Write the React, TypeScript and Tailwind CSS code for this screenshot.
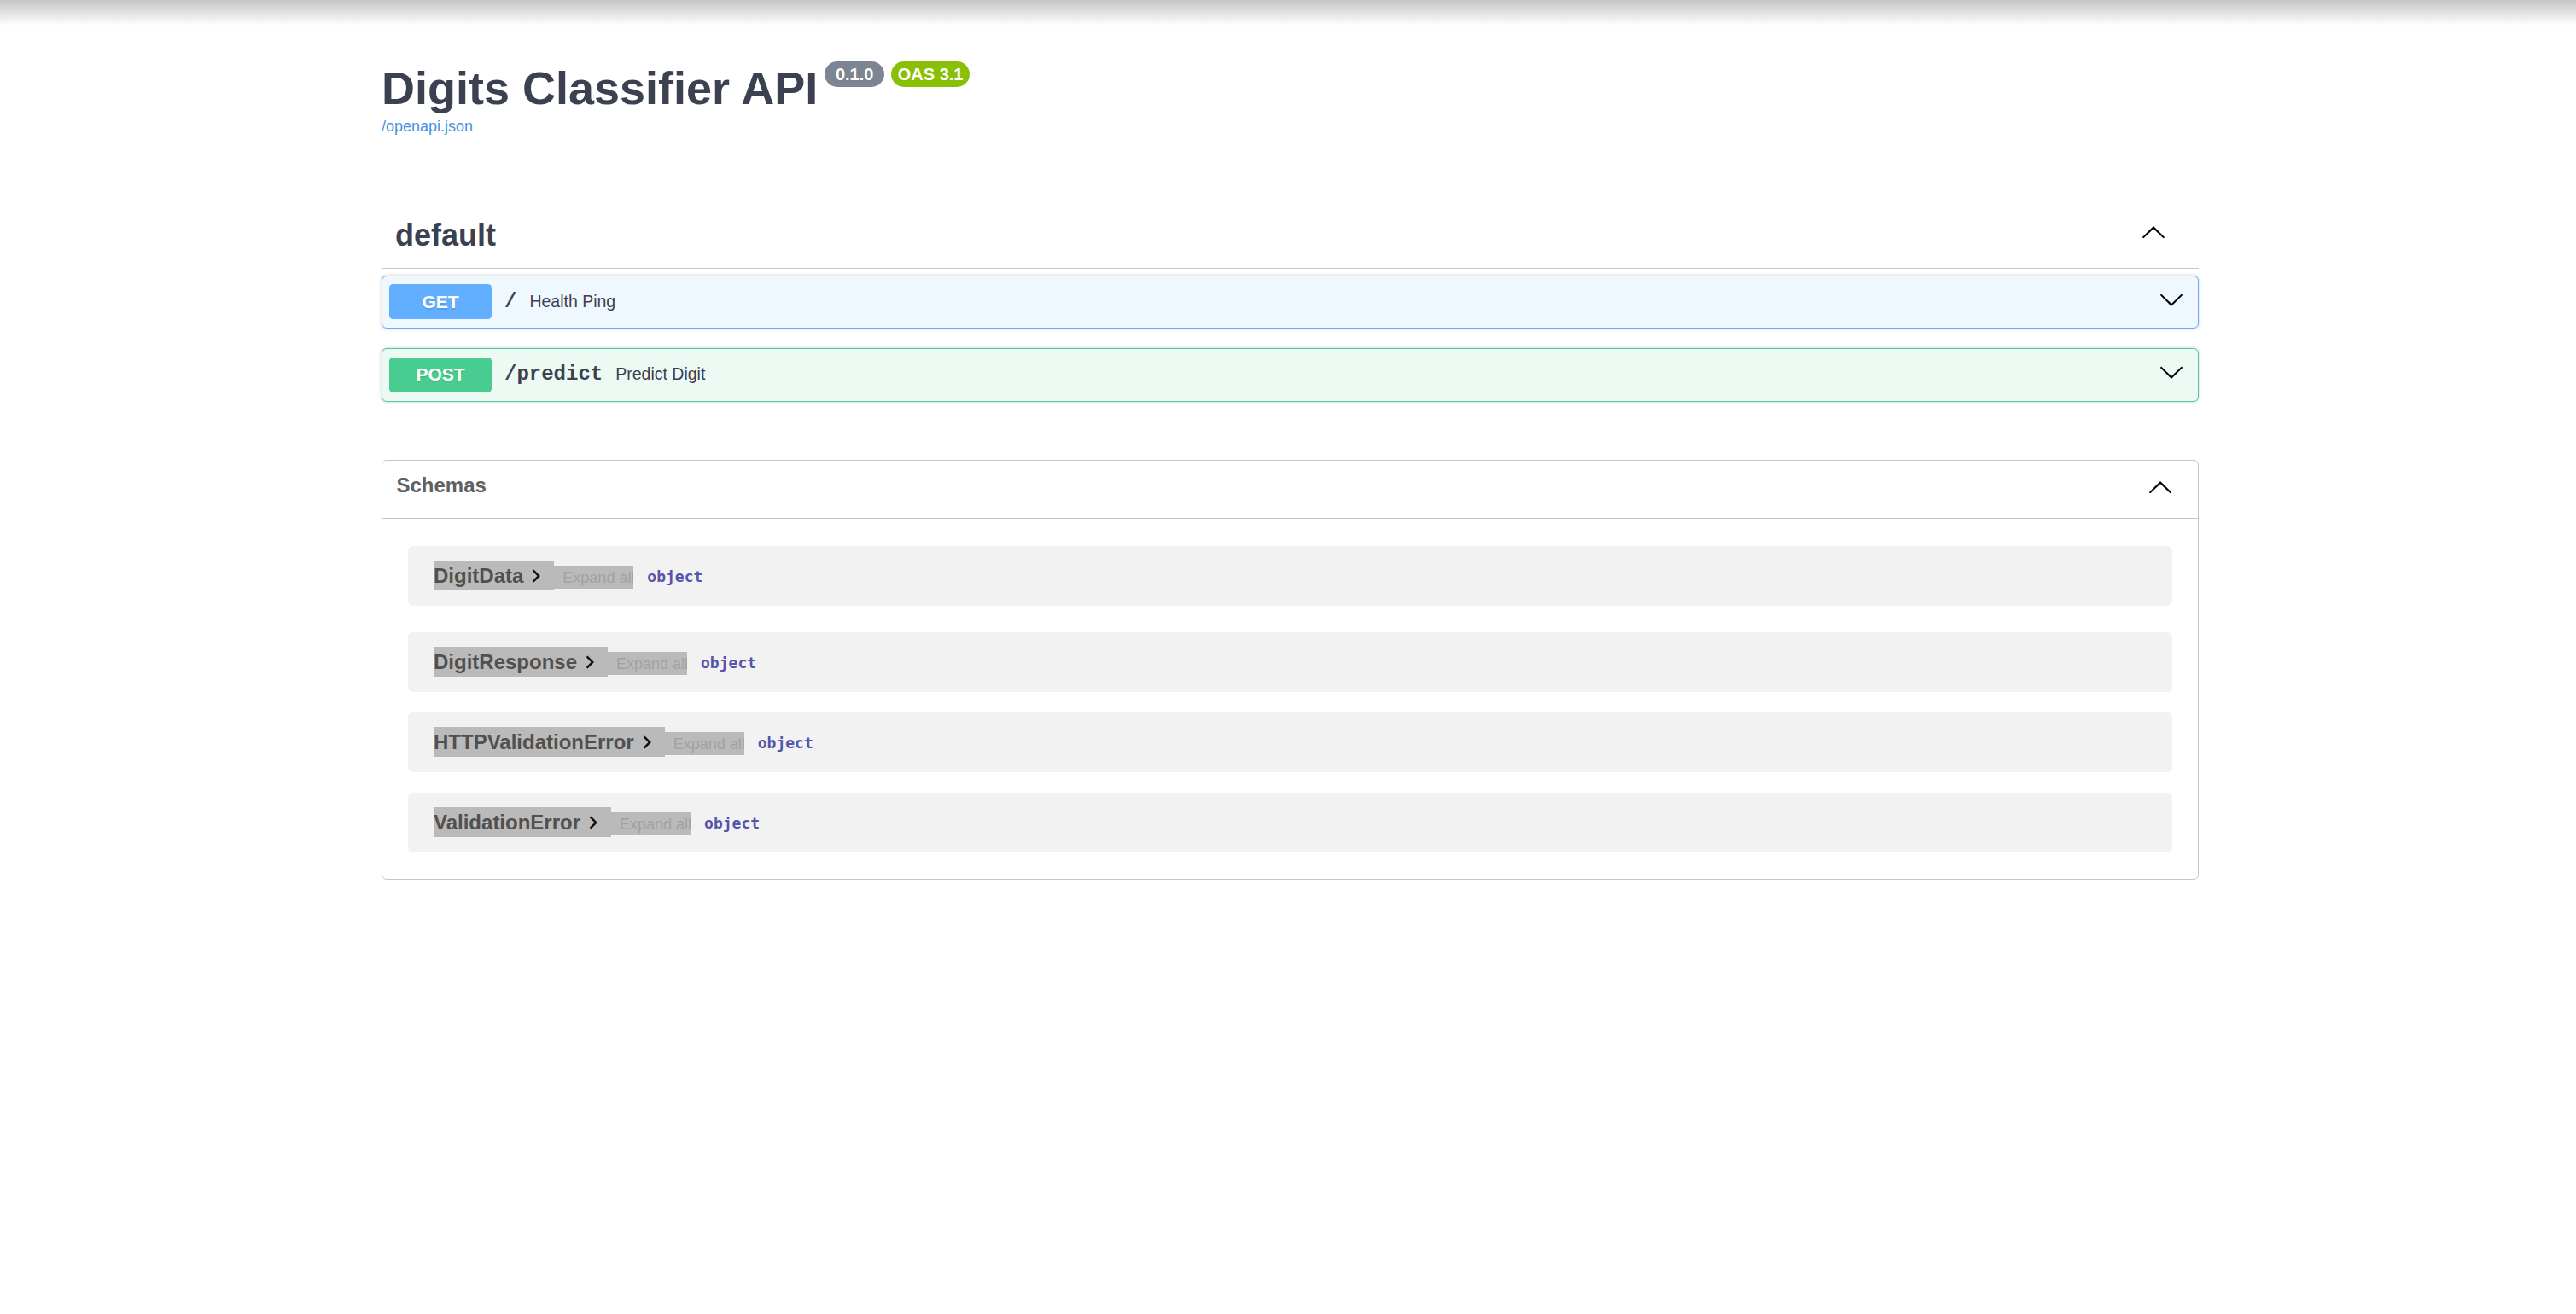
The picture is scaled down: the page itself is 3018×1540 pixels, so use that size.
import React from "react";

const ARROW =
  "M17.418 6.109c.272-.268.709-.268.979 0s.271.701 0 .969l-7.908 7.83c-.27.268-.707.268-.979 0l-7.908-7.83c-.27-.268-.27-.701 0-.969.271-.268.709-.268.979 0L10 13.25l7.418-7.141z";

function Arrow({ up = false, className = "" }: { up?: boolean; className?: string }) {
  return (
    <svg
      width="30"
      height="30"
      viewBox="0 0 20 20"
      className={className}
      style={up ? { transform: "rotate(180deg)" } : undefined}
    >
      <path d={ARROW} fill="#000" />
    </svg>
  );
}

function ToggleChevron() {
  return (
    <svg width="30" height="30" viewBox="0 0 24 24" className="shrink-0">
      <path d="M10 6L8.59 7.41 13.17 12l-4.58 4.59L10 18l6-6z" fill="#111" />
    </svg>
  );
}

function Op({
  method,
  path,
  desc,
  color,
  h,
}: {
  method: string;
  path: string;
  desc: string;
  color: string;
  h: string;
}) {
  const border = color === "get" ? "border-[#61affe]" : "border-[#49cc90]";
  const bgc = color === "get" ? "bg-[#eff7ff]" : "bg-[#edfaf4]";
  const badge = color === "get" ? "bg-[#61affe]" : "bg-[#49cc90]";
  return (
    <div
      className={`flex items-center ${h} ${border} ${bgc} border-[1.5px] rounded-[6px] pl-[8px] pr-[16px] shadow-[0_0_4.5px_rgba(0,0,0,0.19)]`}
    >
      <span
        className={`${badge} w-[120px] h-[41px] rounded-[4.5px] flex items-center justify-center text-white text-[21px] font-bold [text-shadow:0_1.5px_0_rgba(0,0,0,0.1)]`}
      >
        {method}
      </span>
      <span className="px-[15px] font-['Liberation_Mono','Courier_New',monospace] font-bold text-[24px] text-[#3b4151]">
        {path}
      </span>
      <span className="flex-1 text-[19.5px] text-[#3b4151]">{desc}</span>
      <Arrow className="mb-[6px]" />
    </div>
  );
}

function Model({ name, mb }: { name: string; mb: string }) {
  return (
    <div className={`h-[70px] bg-[#f2f2f2] rounded-[6px] mx-[30px] ${mb} pl-[30px] pt-[17px] flex items-start`}>
      <span className="h-[35px] bg-[#bababa] flex items-center pr-[6px]">
        <span className="text-[24px] leading-none font-bold text-[#505050]">{name}</span>
        <ToggleChevron />
      </span>
      <span className="mt-[6px] h-[27px] w-[93px] bg-[#bababa] pl-[10px] flex items-center overflow-hidden whitespace-nowrap text-[18px] leading-none text-[#a2a2a2]">
        Expand all
      </span>
      <span className="ml-[16px] mt-[10px] text-[18px] leading-none font-bold text-[#5555aa] font-['DejaVu_Sans_Mono','Liberation_Mono',monospace]">
        object
      </span>
    </div>
  );
}

export default function App() {
  return (
    <div className="relative min-h-screen bg-white font-['Liberation_Sans',Arial,sans-serif]">
      <div className="pointer-events-none absolute inset-x-0 top-0 h-[30px] bg-linear-to-b from-[#c6c6c6] to-white" />
      <div className="ml-[447px] w-[2129px]">
        <div className="pt-[72px] flex items-start">
          <h2 className="mt-[4px] text-[54px] leading-none font-bold text-[#3b4151]">Digits Classifier API</h2>
          <span className="ml-[8px] h-[30px] w-[70px] rounded-full bg-[#7d8492] flex items-center justify-center text-white text-[20px] font-bold">
            0.1.0
          </span>
          <span className="ml-[8px] h-[30px] w-[92px] rounded-full bg-[#89bf04] flex items-center justify-center text-white text-[20px] font-bold">
            OAS 3.1
          </span>
        </div>
        <a className="block mt-[9px] text-[18px] leading-none text-[#4990e2]">/openapi.json</a>

        <div className="mt-[101px]">
          <div className="flex items-start justify-between pl-[16px] pr-[38px] pb-[20px] border-b-[1.5px] border-[rgba(59,65,81,0.3)]">
            <h3 className="text-[36px] leading-none font-bold text-[#3b4151]">default</h3>
            <Arrow up />
          </div>
          <div className="mt-[7.5px]">
            <Op method="GET" path="/" desc="Health Ping" color="get" h="h-[62px]" />
          </div>
          <div className="mt-[23px]">
            <Op method="POST" path="/predict" desc="Predict Digit" color="post" h="h-[63px]" />
          </div>
        </div>

        <section className="mt-[68px] border-[1.5px] border-[rgba(59,65,81,0.3)] rounded-[6px]">
          <div className="h-[68.5px] flex items-start justify-between pt-[17.5px] pl-[16.5px] pr-[29px] border-b-[1.5px] border-[rgba(59,65,81,0.3)]">
            <h4 className="text-[24px] leading-none font-bold text-[#606060]">Schemas</h4>
            <Arrow up />
          </div>
          <div className="pt-[32px] pb-[30.5px]">
            <Model name="DigitData" mb="mb-[31px]" />
            <Model name="DigitResponse" mb="mb-[24px]" />
            <Model name="HTTPValidationError" mb="mb-[24px]" />
            <Model name="ValidationError" mb="mb-0" />
          </div>
        </section>
      </div>
    </div>
  );
}
